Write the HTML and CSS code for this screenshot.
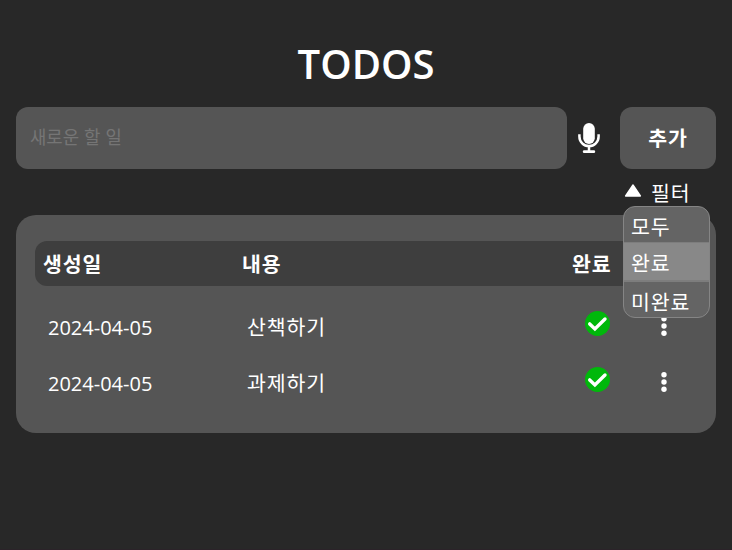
FILE: index.html
```html
<!DOCTYPE html>
<html lang="ko">
<head>
<meta charset="utf-8">
<title>TODOS</title>
<link rel="stylesheet" href="styles.css">
</head>
<body>
<main class="app">
  <h1 class="title"><span>TODOS</span></h1>
  <form class="entry">
    <input class="entry-input" type="text" placeholder="새로운 할 일">
    <button class="mic" type="button" aria-label="음성 입력">
      <svg width="22" height="31" viewBox="0 0 22 31">
        <rect x="5.2" y="0" width="11.6" height="21" rx="5.8" fill="#fff"/>
        <path d="M1.4 11.3v2.2a9.6 9.6 0 0 0 19.2 0v-2.2M11 23v5" fill="none" stroke="#fff" stroke-width="2.5"/>
        <path d="M6.2 28.7h9.6" stroke="#fff" stroke-width="2.8" stroke-linecap="round"/>
      </svg>
    </button>
    <button class="add" type="button"><span>추가</span></button>
  </form>
  <div class="filter">
    <svg class="filter-arrow" width="18" height="14" viewBox="0 0 18 14"><path d="M9 1l7.4 11H1.6z" fill="#fff" stroke="#fff" stroke-width="1.4" stroke-linejoin="round"/></svg>
    <span class="filter-label">필터</span>
    <ul class="menu">
      <li>모두</li>
      <li class="active">완료</li>
      <li>미완료</li>
    </ul>
  </div>
  <section class="list">
    <div class="row head"><span>생성일</span><span>내용</span><span>완료</span></div>
    <div class="row item">
      <span class="date">2024-04-05</span><span>산책하기</span>
      <svg class="check" width="26" height="26" viewBox="0 0 26 26"><circle cx="13.5" cy="12.5" r="12.5" fill="#00b80b"/><path d="M5.7 12.9l5.2 5L21 8" fill="none" stroke="#fff" stroke-width="3.4" stroke-linecap="round"/></svg>
      <svg class="more" width="6" height="20" viewBox="0 0 6 20" fill="#fff"><circle cx="3" cy="2.7" r="2.7"/><circle cx="3" cy="10" r="2.7"/><circle cx="3" cy="17.3" r="2.7"/></svg>
    </div>
    <div class="row item">
      <span class="date">2024-04-05</span><span>과제하기</span>
      <svg class="check" width="26" height="26" viewBox="0 0 26 26"><circle cx="13.5" cy="12.5" r="12.5" fill="#00b80b"/><path d="M5.7 12.9l5.2 5L21 8" fill="none" stroke="#fff" stroke-width="3.4" stroke-linecap="round"/></svg>
      <svg class="more" width="6" height="20" viewBox="0 0 6 20" fill="#fff"><circle cx="3" cy="2.7" r="2.7"/><circle cx="3" cy="10" r="2.7"/><circle cx="3" cy="17.3" r="2.7"/></svg>
    </div>
  </section>
</main>
</body>
</html>
```
FILE: styles.css
```css
* { box-sizing: border-box; }
body {
  margin: 0;
  min-height: 550px;
  border-bottom: 1px solid #2b2329;
  background: #282828;
  color: #fff;
  font-family: "Noto Sans CJK KR", sans-serif;
  font-size: 20.5px;
  line-height: 30px;
  letter-spacing: 0.9px;
}
.app { padding: 36px 16px 0; }
.title {
  margin: 0 0 15px;
  font: 600 40px/56px "Open Sans", sans-serif;
  letter-spacing: 0;
  text-align: center;
}
.entry { display: flex; align-items: center; height: 62px; }
.entry-input {
  width: 551px;
  height: 62px;
  padding: 0 14px 5px;
  border: 0;
  border-radius: 12px;
  background: #555;
  font: 17.8px "Noto Sans CJK KR", sans-serif;
}
.entry-input::placeholder { color: #757575; opacity: 1; }
button { border: 0; padding: 0; color: inherit; }
.mic { margin-left: 11px; width: 22px; height: 31px; background: none; }
.mic svg { display: block; }
.add {
  margin-left: auto;
  width: 96px;
  height: 62px;
  padding-bottom: 2px;
  border-radius: 12px;
  background: #555;
  font: bold 20.5px/30px "Noto Sans CJK KR", sans-serif;
  letter-spacing: 0.9px;
}
.filter {
  position: relative;
  display: flex;
  align-items: center;
  width: 100px;
  height: 46px;
  margin-left: auto;
}
.filter-arrow { margin: 0 9px 3px 8px; }
.menu {
  position: absolute;
  z-index: 1;
  top: 37px;
  left: 7px;
  width: 87px;
  height: 112px;
  margin: 0;
  padding: 0;
  overflow: hidden;
  list-style: none;
  border: 1px solid #858585;
  border-radius: 12px;
  background: #646464;
}
.menu li { height: 35px; padding: 4px 0 0 7px; }
.menu .active {
  height: 40px;
  background: #888;
  border: solid #7d7d7d;
  border-width: 1px 0 2px;
}
.list {
  height: 218px;
  padding: 26px 19px;
  border-radius: 20px;
  background: #555;
}
.row {
  display: grid;
  grid-template-columns: 199px 330px 1fr;
  align-items: center;
}
.head {
  height: 45px;
  margin-bottom: 14px;
  padding: 0 0 2px 8px;
  border-radius: 12px;
  background: #3e3e3e;
  font-weight: bold;
}
.item {
  height: 56px;
  padding: 0 0 4px 13px;
  grid-template-columns: 199px 337px 77px 1fr;
}
.date {
  padding-top: 4px;
  font: 20px/28px "Open Sans", sans-serif;
  letter-spacing: 0;
}
.check { margin-bottom: 5px; }
```
